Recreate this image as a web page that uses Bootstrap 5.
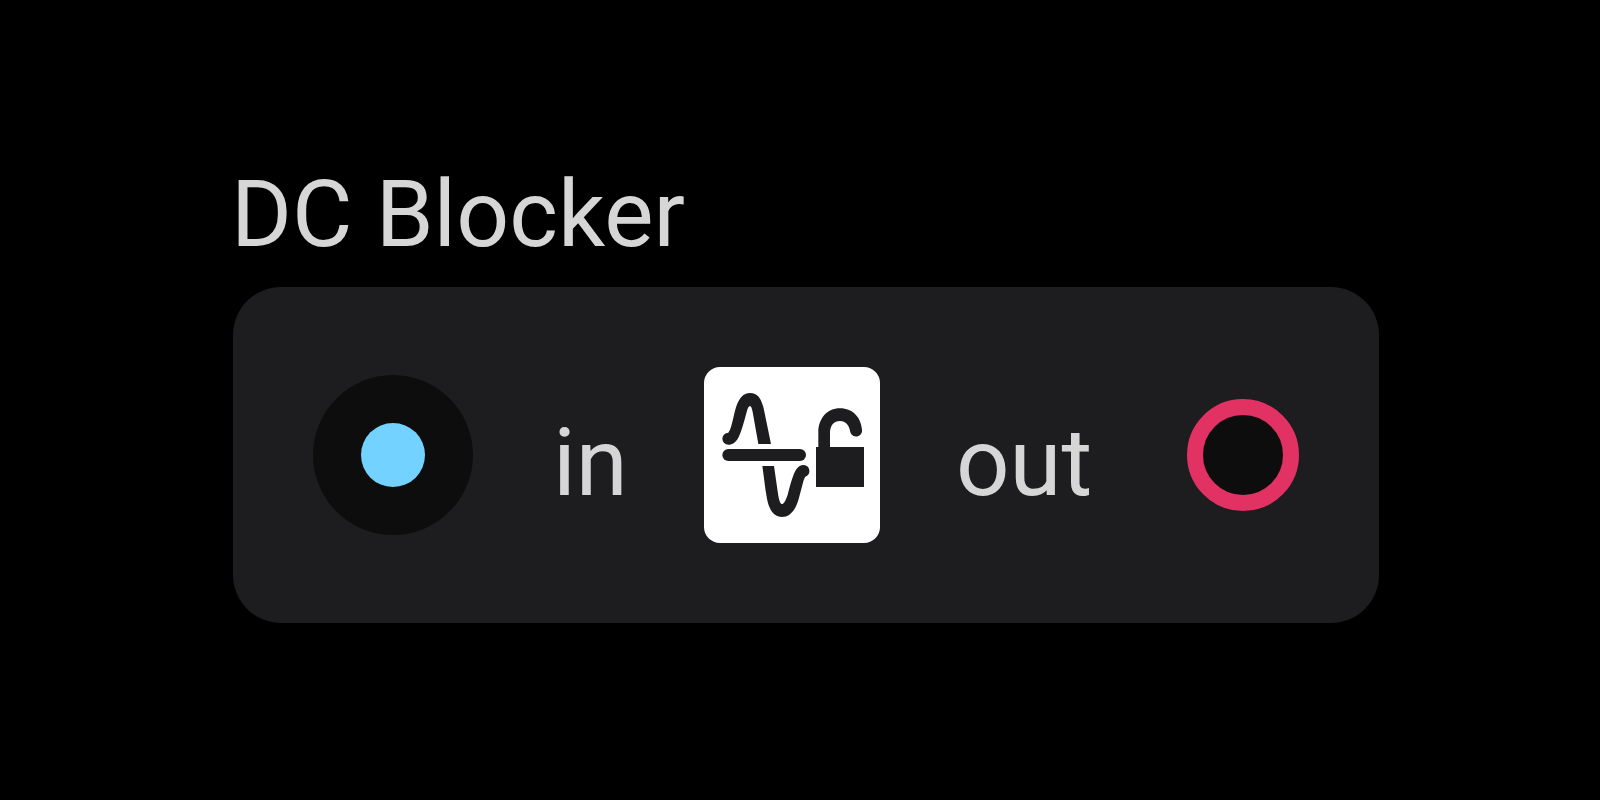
<!DOCTYPE html>
<html lang="en">
<head>
<meta charset="utf-8">
<meta name="viewport" content="width=device-width, initial-scale=1">
<title>DC Blocker</title>
<link href="https://cdn.jsdelivr.net/npm/bootstrap@5.3.0/dist/css/bootstrap.min.css" rel="stylesheet">
<style>
  body { background: #000; color: #d6d6d6; font-family: Roboto, sans-serif; }
  .module { padding: 0 221px 18px 233px; }
  .module-title, .port-label { font-size: 94px; line-height: 112px; font-weight: 400; white-space: nowrap; }
  .module-title { font-size: 93px; margin: 0 0 16px -2px; }
  .panel { background: #1d1d1f; border-radius: 48px; padding: 80px; grid-template-columns: auto 231fr auto 307fr auto; }
  .port-label { padding: 16px 0 0 80px; }
  .port-label.port-out { padding-left: 76px; }
  .jack-in { width: 160px; height: 160px; background: #0d0d0d; }
  .jack-dot { width: 64px; height: 64px; background: #73d2ff; }
  .jack-out { width: 112px; height: 112px; background: #0d0d0d; border: 16px solid #e13263; }
  .filter-toggle { width: 176px; height: 176px; border-radius: 16px; background: #fff; }
  .filter-toggle:hover { background: #fff; }
</style>
</head>
<body>
<main class="module min-vh-100 d-flex flex-column justify-content-center">
  <h1 class="module-title">DC Blocker</h1>
  <section class="panel d-grid align-items-center" aria-label="DC Blocker module">
    <div class="jack-in rounded-circle d-flex align-items-center justify-content-center"><span class="jack-dot rounded-circle"></span></div>
    <div class="port-label">in</div>
    <button type="button" class="filter-toggle btn p-0 border-0 d-block" aria-label="Toggle DC filter">
      <svg class="d-block w-100 h-100" viewBox="42 36 528 528" fill="#1d1d1f" aria-hidden="true">
        <rect x="97" y="282" width="251" height="36" rx="18"/>
        <path d="M115 233C125 222 129 187 138 157C147 129 160 114 180 114C202 114 215 130 222 165L243 267H205L188 171C186 160 183 153 180 153C176 153 173 160 170 171C161 204 154 232 145 248C137 262 128 269 115 269A18 18 0 0 1 115 233Z"/>
        <path d="M217 333H252L264 416C267 435 271 447 276 447C282 447 288 434 293 419C301 390 308 360 319 343C325 334 332 330 341 330A18 18 0 0 1 346 365C340 373 336 397 327 428C318 464 301 486 276 486C250 486 237 462 231 431C225 400 222 365 217 333Z"/>
        <path d="M385 277V232C385 191 411 160 450 160C489 160 513 188 516 224A18 18 0 0 1 481 232C478 210 467 198 450 198C432 198 420 211 420 234V277Z"/>
        <path d="M378 276H522V396H378Z"/>
      </svg>
    </button>
    <div class="port-label port-out">out</div>
    <div class="jack-out rounded-circle"></div>
  </section>
</main>
<script src="https://cdn.jsdelivr.net/npm/bootstrap@5.3.0/dist/js/bootstrap.bundle.min.js"></script>
</body>
</html>
